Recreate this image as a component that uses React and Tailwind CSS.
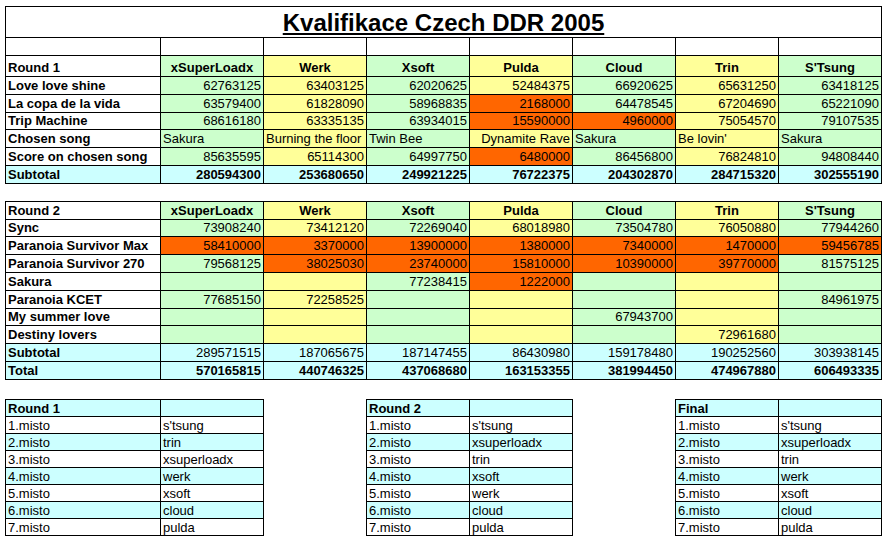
import clsx from 'clsx';

const players = ['xSuperLoadx', 'Werk', 'Xsoft', 'Pulda', 'Cloud', 'Trin', "S'Tsung"];

const round1 = [
  { label: 'Love love shine', vals: ['62763125', '63403125', '62020625', '52484375', '66920625', '65631250', '63418125'] },
  { label: 'La copa de la vida', vals: ['63579400', '61828090', '58968835', '2168000', '64478545', '67204690', '65221090'], orange: [3] },
  { label: 'Trip Machine', vals: ['68616180', '63335135', '63934015', '15590000', '4960000', '75054570', '79107535'], orange: [3, 4] },
  { label: 'Chosen song', vals: ['Sakura', 'Burning the floor', 'Twin Bee', 'Dynamite Rave', 'Sakura', "Be lovin'", 'Sakura'], text: true },
  { label: 'Score on chosen song', vals: ['85635595', '65114300', '64997750', '6480000', '86456800', '76824810', '94808440'], orange: [3] },
  { label: 'Subtotal', vals: ['280594300', '253680650', '249921225', '76722375', '204302870', '284715320', '302555190'], total: true, bold: true },
];

const round2 = [
  { label: 'Sync', vals: ['73908240', '73412120', '72269040', '68018980', '73504780', '76050880', '77944260'] },
  { label: 'Paranoia Survivor Max', vals: ['58410000', '3370000', '13900000', '1380000', '7340000', '1470000', '59456785'], orange: [0, 1, 2, 3, 4, 5, 6] },
  { label: 'Paranoia Survivor 270', vals: ['79568125', '38025030', '23740000', '15810000', '10390000', '39770000', '81575125'], orange: [1, 2, 3, 4, 5] },
  { label: 'Sakura', vals: ['', '', '77238415', '1222000', '', '', ''], orange: [3] },
  { label: 'Paranoia KCET', vals: ['77685150', '72258525', '', '', '', '', '84961975'] },
  { label: 'My summer love', vals: ['', '', '', '', '67943700', '', ''] },
  { label: 'Destiny lovers', vals: ['', '', '', '', '', '72961680', ''] },
  { label: 'Subtotal', vals: ['289571515', '187065675', '187147455', '86430980', '159178480', '190252560', '303938145'], total: true },
  { label: 'Total', vals: ['570165815', '440746325', '437068680', '163153355', '381994450', '474967880', '606493335'], total: true, bold: true },
];

const standings = [
  { title: 'Round 1', first: 'w-[154px]', names: ["s'tsung", 'trin', 'xsuperloadx', 'werk', 'xsoft', 'cloud', 'pulda'] },
  { title: 'Round 2', first: 'w-[102px]', names: ["s'tsung", 'xsuperloadx', 'trin', 'xsoft', 'werk', 'cloud', 'pulda'] },
  { title: 'Final', first: 'w-[102px]', names: ["s'tsung", 'xsuperloadx', 'trin', 'werk', 'xsoft', 'cloud', 'pulda'] },
];

// alternating column colours, like the sheet
const colBg = (i) => (i % 2 === 0 ? 'bg-[#ccffcc]' : 'bg-[#ffff99]');

function Cell({ children, bg = 'bg-white', align = 'justify-end', bold }) {
  return (
    <div
      className={clsx(
        'flex items-end overflow-visible whitespace-nowrap px-[2px] pb-[1px] leading-[15px]',
        bg,
        align,
        bold && 'font-bold'
      )}
    >
      {children}
    </div>
  );
}

function HeaderRow({ label }) {
  return (
    <>
      <Cell align="justify-start" bold>{label}</Cell>
      {players.map((p, i) => (
        <Cell key={p} bg={colBg(i)} align="justify-center" bold>{p}</Cell>
      ))}
    </>
  );
}

function ScoreRow({ row }) {
  return (
    <>
      <Cell align="justify-start" bold bg={row.total ? 'bg-[#ccffff]' : 'bg-white'}>{row.label}</Cell>
      {row.vals.map((v, i) => {
        let bg = colBg(i);
        if (row.total) bg = 'bg-[#ccffff]';
        if (row.orange && row.orange.includes(i)) bg = 'bg-[#ff6600]';
        let align = 'justify-end';
        if (row.text && i !== 3) align = 'justify-start';
        return (
          <Cell key={i} bg={bg} align={align} bold={row.bold}>{v}</Cell>
        );
      })}
    </>
  );
}

function Standings({ table }) {
  return (
    <div className="flex flex-col gap-px bg-black p-px">
      {[table.title, ...table.names].map((name, i) => {
        const bg = i % 2 === 0 ? 'bg-[#ccffff]' : 'bg-white';
        return (
          <div key={i} className="flex h-[16px] gap-px">
            <div className={clsx('flex items-end px-[2px] leading-[15px]', table.first, bg, i === 0 && 'font-bold')}>
              {i === 0 ? table.title : `${i}.misto`}
            </div>
            <div className={clsx('flex w-[102px] items-end px-[2px] leading-[15px]', bg)}>
              {i === 0 ? '' : name}
            </div>
          </div>
        );
      })}
    </div>
  );
}

export default function App() {
  return (
    <div className="min-h-screen bg-white pl-[5px] pt-[6px] text-[13px] text-black" style={{ fontFamily: '"Liberation Sans", Arial, sans-serif' }}>
      <div className="grid w-fit grid-cols-[154px_repeat(7,102px)] grid-rows-[30px_17px_20px_repeat(6,16.8px)] gap-px bg-black p-px">
        <div className="col-span-8 flex items-end justify-center bg-white">
          <span className="text-[24px] font-bold leading-[28px] underline decoration-2 underline-offset-[2px]">
            Kvalifikace Czech DDR 2005
          </span>
        </div>
        {Array.from({ length: 8 }).map((_, i) => (
          <div key={i} className="bg-white" />
        ))}
        <HeaderRow label="Round 1" />
        {round1.map((row) => (
          <ScoreRow key={row.label} row={row} />
        ))}
      </div>

      <div className="mt-[17px] grid w-fit grid-cols-[154px_repeat(7,102px)] grid-rows-[repeat(10,16.8px)] gap-px bg-black p-px">
        <HeaderRow label="Round 2" />
        {round2.map((row) => (
          <ScoreRow key={row.label} row={row} />
        ))}
      </div>

      <div className="mt-[19px] flex items-start gap-[102px]">
        {standings.map((t) => (
          <Standings key={t.title} table={t} />
        ))}
      </div>
    </div>
  );
}
